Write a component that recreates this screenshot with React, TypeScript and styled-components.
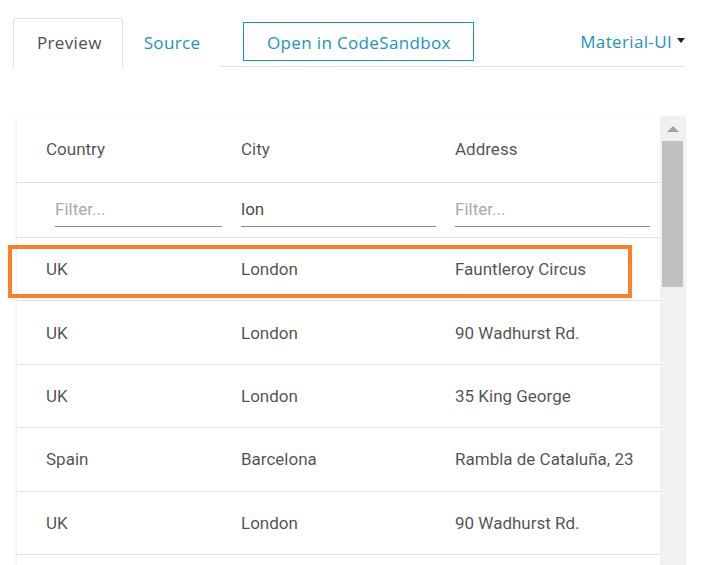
import React from "react"
import styled, { createGlobalStyle } from "styled-components"

const GlobalStyle = createGlobalStyle`
  html, body {
    margin: 0;
    padding: 0;
    background: #fff;
  }
`

const accent = "#1b93c2"

const rows = [
  { country: "UK", city: "London", address: "Fauntleroy Circus" },
  { country: "UK", city: "London", address: "90 Wadhurst Rd." },
  { country: "UK", city: "London", address: "35 King George" },
  { country: "Spain", city: "Barcelona", address: "Rambla de Cataluña, 23" },
  { country: "UK", city: "London", address: "90 Wadhurst Rd." },
]

const Page = styled.div`
  position: relative;
  width: 706px;
  height: 565px;
  overflow: hidden;
  padding: 17px 21px 0 13px;
  box-sizing: border-box;
`

const Nav = styled.div`
  display: flex;
  align-items: flex-end;
  height: 49px;
  border-bottom: 1px solid #dee2e6;
  font-family: "Open Sans", "Liberation Sans", sans-serif;
  font-size: 17px;
  letter-spacing: 0.35px;
`

const Tab = styled.div<{ $active?: boolean }>`
  height: 49px;
  box-sizing: border-box;
  display: flex;
  align-items: center;
  padding: 0 ${(p) => (p.$active ? "20px 0 23px" : "19px 0 20px")};
  margin-bottom: -1px;
  color: ${(p) => (p.$active ? "#495057" : accent)};
  background: #fff;
  border: 1px solid ${(p) => (p.$active ? "#dee2e6" : "transparent")};
  border-bottom-color: ${(p) => (p.$active ? "#fff" : "transparent")};
  border-radius: 4px 4px 0 0;
`

const SandboxButton = styled.div`
  margin: 0 0 5px 23px;
  width: 231px;
  height: 39px;
  box-sizing: border-box;
  border: 1px solid ${accent};
  color: ${accent};
  display: flex;
  align-items: center;
  justify-content: center;
  padding-top: 1px;
`

const Dropdown = styled.div`
  margin-left: auto;
  height: 49px;
  display: flex;
  align-items: center;
  color: ${accent};
  box-sizing: border-box;
`

const Caret = styled.span`
  margin-left: 5px;
  width: 0;
  height: 0;
  border-left: 4.5px solid transparent;
  border-right: 4.5px solid transparent;
  border-top: 5px solid #222;
  margin-top: -3px;
`

const Panel = styled.div`
  margin: 49px 0 0 4px;
  display: flex;
  height: 460px;
  box-shadow: 0 1px 3px rgba(0, 0, 0, 0.12), 0 1px 1px rgba(0, 0, 0, 0.06);
  background: #fff;
`

const Table = styled.div`
  flex: 1;
  font-family: Roboto, "Liberation Sans", sans-serif;
  font-size: 17px;
  color: rgba(0, 0, 0, 0.7);
`

const Row = styled.div<{ $height: number }>`
  display: grid;
  grid-template-columns: 212px 214px 1fr;
  height: ${(p) => p.$height}px;
  box-sizing: border-box;
  border-bottom: 1px solid #e0e0e0;
  align-items: center;
`

const Cell = styled.div<{ $first?: boolean }>`
  padding-left: ${(p) => (p.$first ? 29 : 12)}px;
  white-space: nowrap;
`

const FilterCell = styled.div<{ $first?: boolean; $last?: boolean }>`
  padding: 0 ${(p) => (p.$last ? 10 : 7)}px 0 ${(p) => (p.$first ? 38 : 12)}px;
`

const FilterInput = styled.div<{ $empty?: boolean }>`
  height: 33px;
  padding-bottom: 2px;
  box-sizing: border-box;
  border-bottom: 1px solid #8c8c8c;
  color: ${(p) => (p.$empty ? "#a9a9a9" : "rgba(0, 0, 0, 0.74)")};
  margin-top: 1px;
  display: flex;
  align-items: center;
`

const ScrollTrack = styled.div`
  width: 25px;
  background: #f1f1f1;
  display: flex;
  flex-direction: column;
  align-items: center;
`

const ArrowUp = styled.div`
  margin-top: 10px;
  width: 0;
  height: 0;
  border-left: 6px solid transparent;
  border-right: 6px solid transparent;
  border-bottom: 6px solid #a3a3a3;
`

const Thumb = styled.div`
  margin-top: 9px;
  width: 21px;
  height: 146px;
  background: #c1c1c1;
`

const Highlight = styled.div`
  position: absolute;
  left: 8px;
  top: 245px;
  width: 624px;
  height: 53px;
  box-sizing: border-box;
  border: 4px solid #ff7f27;
  pointer-events: none;
`

export default function App() {
  return (
    <Page>
      <GlobalStyle />
      <Nav>
        <Tab $active>Preview</Tab>
        <Tab>Source</Tab>
        <SandboxButton>Open in CodeSandbox</SandboxButton>
        <Dropdown>
          Material-UI
          <Caret />
        </Dropdown>
      </Nav>
      <Panel>
        <Table>
          <Row $height={67}>
            <Cell $first>Country</Cell>
            <Cell>City</Cell>
            <Cell>Address</Cell>
          </Row>
          <Row $height={55}>
            <FilterCell $first>
              <FilterInput $empty>Filter...</FilterInput>
            </FilterCell>
            <FilterCell>
              <FilterInput>lon</FilterInput>
            </FilterCell>
            <FilterCell $last>
              <FilterInput $empty>Filter...</FilterInput>
            </FilterCell>
          </Row>
          {rows.map((r, i) => (
            <Row key={i} $height={63.4}>
              <Cell $first>{r.country}</Cell>
              <Cell>{r.city}</Cell>
              <Cell>{r.address}</Cell>
            </Row>
          ))}
        </Table>
        <ScrollTrack>
          <ArrowUp />
          <Thumb />
        </ScrollTrack>
      </Panel>
      <Highlight />
    </Page>
  )
}
